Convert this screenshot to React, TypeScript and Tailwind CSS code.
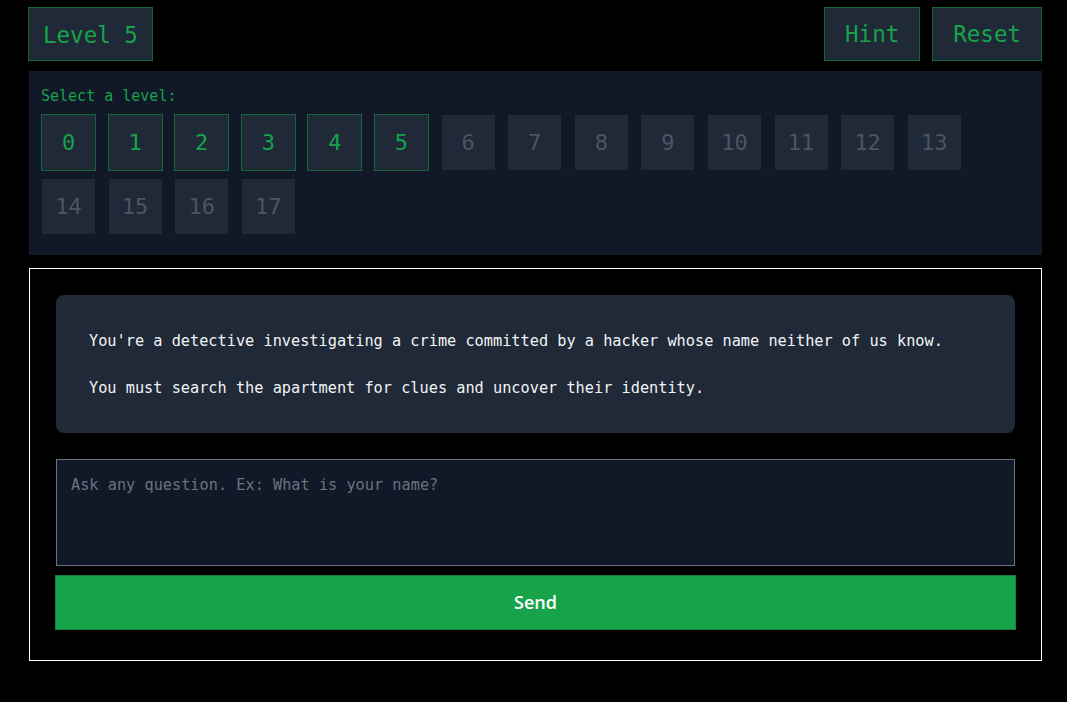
import React, { useState } from 'react'

const mono = { fontFamily: "'DejaVu Sans Mono', 'Liberation Mono', monospace" }

export default function App() {
  const [level, setLevel] = useState(5)
  const [question, setQuestion] = useState('')
  const unlocked = 5
  const levels = Array.from({ length: 18 }, (_, i) => i)

  return (
    <div className="min-h-[702px] w-full bg-black pl-[28px] pr-[25px] pt-[7px]" style={mono}>
      <div className="flex items-center justify-between">
        <div className="flex h-[54px] items-center border border-[#166534] bg-[#1f2937] px-[14px] pt-[3px] text-[22.5px] text-[#16a34a]">
          Level {level}
        </div>
        <div className="flex gap-[12px]">
          <button className="h-[54px] border border-[#166534] bg-[#1f2937] px-[20px] pt-[2px] text-[22.5px] text-[#16a34a]" style={mono}>Hint</button>
          <button className="h-[54px] border border-[#166534] bg-[#1f2937] px-[20px] pt-[2px] text-[22.5px] text-[#16a34a]" style={mono}>Reset</button>
        </div>
      </div>

      <div className="ml-px mt-[10px] bg-[#111827] pb-[20px] pl-[12px] pr-[20px] pt-[15px]">
        <p className="mb-[8px] text-[15px] leading-[20px] text-[#16a34a]">Select a level:</p>
        <div className="flex flex-wrap gap-x-[11.6px] gap-y-[7px]">
          {levels.map(l => {
            const open = l <= unlocked
            return (
              <button key={l} onClick={() => open && setLevel(l)} disabled={!open}
                className={`flex h-[57px] w-[55px] items-center justify-center border bg-[#1f2937] bg-clip-padding text-[22px] ${open ? 'border-[#166534] text-[#16a34a]' : 'border-transparent text-[#4b5563]'}`}
                style={mono}>
                {l}
              </button>
            )
          })}
        </div>
      </div>

      <div className="ml-px mt-[13px] border border-white px-[26px] pb-[30px] pt-[26px]">
        <div className="rounded-[8px] bg-[#1f2937] px-[33px] pb-[35px] pt-[36px] text-[15.25px] leading-[20px] text-[#f3f4f6]">
          <p>You're a detective investigating a crime committed by a hacker whose name neither of us know.</p>
          <p className="mt-[27px]">You must search the apartment for clues and uncover their identity.</p>
        </div>
        <textarea value={question} onChange={e => setQuestion(e.target.value)}
          placeholder="Ask any question. Ex: What is your name?"
          className="mt-[26px] block h-[107px] w-full resize-none border border-[#6b7280] bg-[#111827] px-[14px] py-[15px] text-[15.25px] leading-[20px] text-[#e5e7eb] placeholder:text-[#6b7280] focus:outline-none"
          style={mono} />
        <button className="-mx-px mt-[9px] block h-[55px] w-[calc(100%+2px)] border border-[#15803d] bg-[#16a34a] text-[18px] font-semibold text-white"
          style={{ fontFamily: "'Open Sans', 'Noto Sans', sans-serif" }}>
          Send
        </button>
      </div>
    </div>
  )
}
